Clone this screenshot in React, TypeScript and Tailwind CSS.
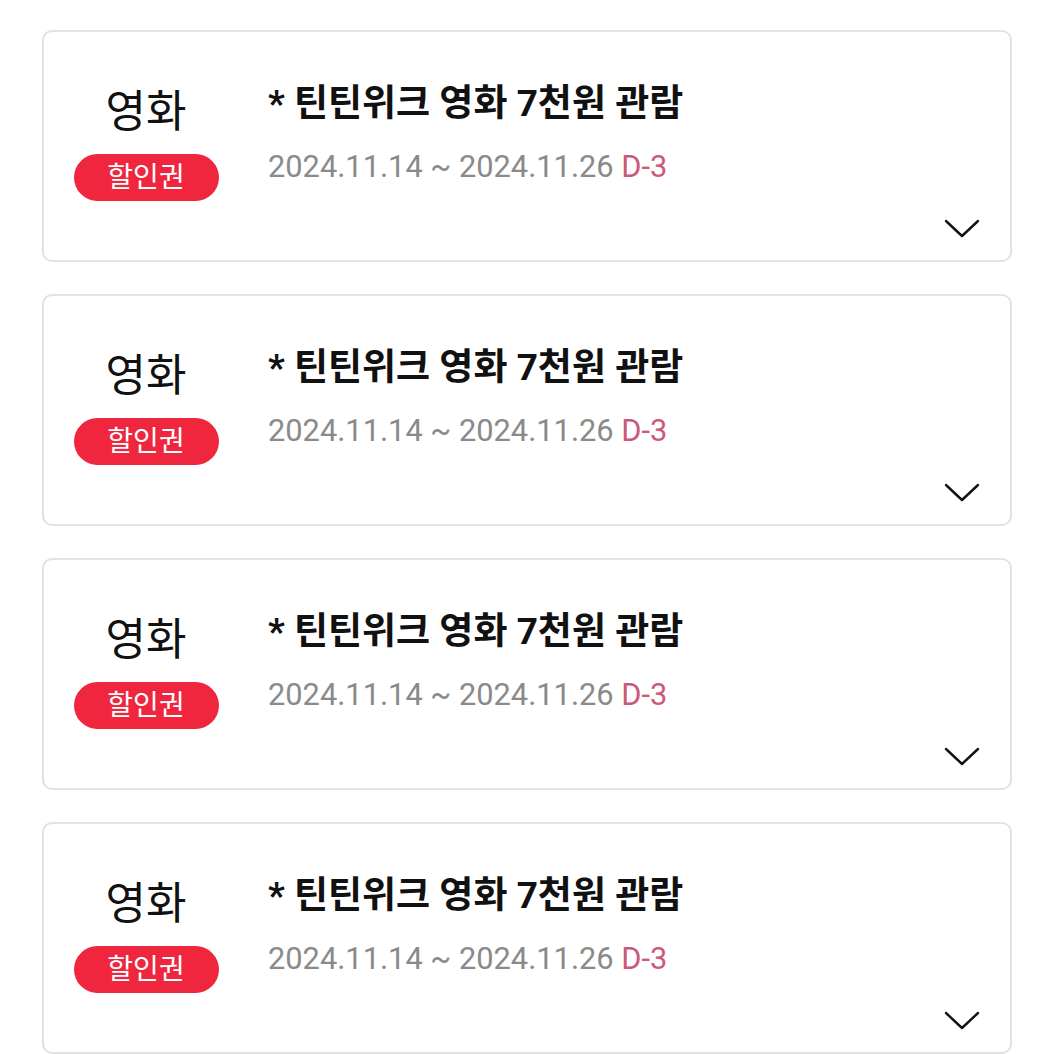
import React from "react";

function Chevron() {
  return (
    <svg width="36" height="20" viewBox="0 0 36 20" fill="none">
      <polyline points="2,2 18,17 34,2" stroke="#111" strokeWidth="2.4" strokeLinecap="round" strokeLinejoin="round" />
    </svg>
  );
}

function Card() {
  return (
    <div className="box-border h-[232px] w-[970px] rounded-[10px] border-2 border-[#e2e2e2] bg-white flex flex-col">
      <div className="flex">
        <div className="w-[204px] flex flex-col items-center pt-[55px]">
          <div className="text-[44px] leading-[50px] text-[#111]">영화</div>
          <div className="mt-[17px] h-[47px] w-[145px] rounded-full bg-[#f0263f] flex items-center justify-center text-white text-[28px] leading-none">
            할인권
          </div>
        </div>
        <div className="ml-[20px] pt-[50px] flex flex-col">
          <div className="text-[37px] leading-[44px] font-bold text-[#111]">* 틴틴위크 영화 7천원 관람</div>
          <div className="mt-[21px] text-[30.8px] leading-[40px] text-[#8a8a8a]">
            2024.11.14 ~ 2024.11.26 <span className="text-[#cc5878]">D-3</span>
          </div>
        </div>
      </div>
      <div className="mt-auto mb-[21px] mr-[30px] flex justify-end">
        <Chevron />
      </div>
    </div>
  );
}

export default function App() {
  return (
    <div
      className="w-[1054px] h-[1054px] overflow-hidden bg-white pt-[30px] pl-[42px] flex flex-col gap-[32px]"
      style={{ fontFamily: 'Roboto, "Noto Sans CJK KR", sans-serif' }}
    >
      <Card />
      <Card />
      <Card />
      <Card />
    </div>
  );
}
